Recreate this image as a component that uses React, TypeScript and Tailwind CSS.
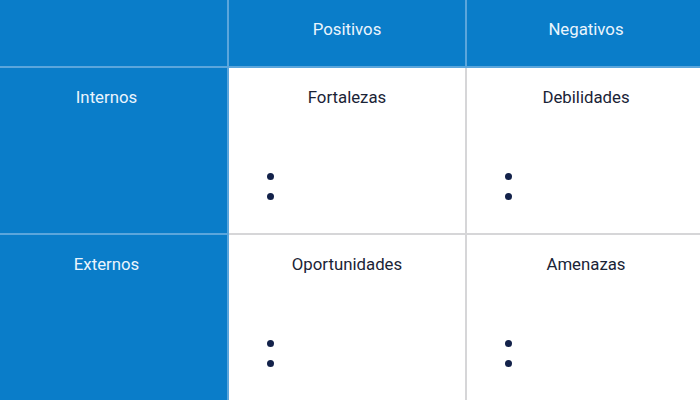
const rows = [
  { label: "Internos", cells: ["Fortalezas", "Debilidades"] },
  { label: "Externos", cells: ["Oportunidades", "Amenazas"] },
];

function Bullets() {
  return (
    <div className="mt-[64px] flex flex-col gap-[13px] pl-[38px]">
      <span className="block h-[7px] w-[7px] rounded-full bg-[#13224a]" />
      <span className="block h-[7px] w-[7px] rounded-full bg-[#13224a]" />
    </div>
  );
}

export default function App() {
  return (
    <div
      className="h-[400px] w-[700px] overflow-hidden bg-white text-[16.8px] leading-6"
      style={{ fontFamily: "Roboto, 'Liberation Sans', sans-serif" }}
    >
      <div className="grid w-[705px] grid-cols-[229px_238px_1fr] grid-rows-[68px_167px_167px]">
        <div className="border-b-2 border-r-2 border-[#5ba6dc] bg-[#0a7dc9]" />
        <div className="flex justify-center border-b-2 border-r-2 border-[#5ba6dc] bg-[#0a7dc9] pt-[17px] text-[#eaf5fd]">
          Positivos
        </div>
        <div className="flex justify-center border-b-2 border-[#5ba6dc] bg-[#0a7dc9] pt-[17px] text-[#eaf5fd]">
          Negativos
        </div>
        {rows.map((r) => (
          <>
            <div
              key={r.label}
              className="flex justify-center border-b-2 border-r-2 border-[#5ba6dc] bg-[#0a7dc9] pr-[14px] pt-[17px] text-[#eaf5fd]"
            >
              {r.label}
            </div>
            {r.cells.map((c, i) => (
              <div
                key={c}
                className={`flex flex-col border-b-2 border-[#d6d6d8] pt-[17px] text-[#1a2336] ${i === 0 ? "border-r-2" : ""}`}
              >
                <div className="text-center">{c}</div>
                <Bullets />
              </div>
            ))}
          </>
        ))}
      </div>
    </div>
  );
}
